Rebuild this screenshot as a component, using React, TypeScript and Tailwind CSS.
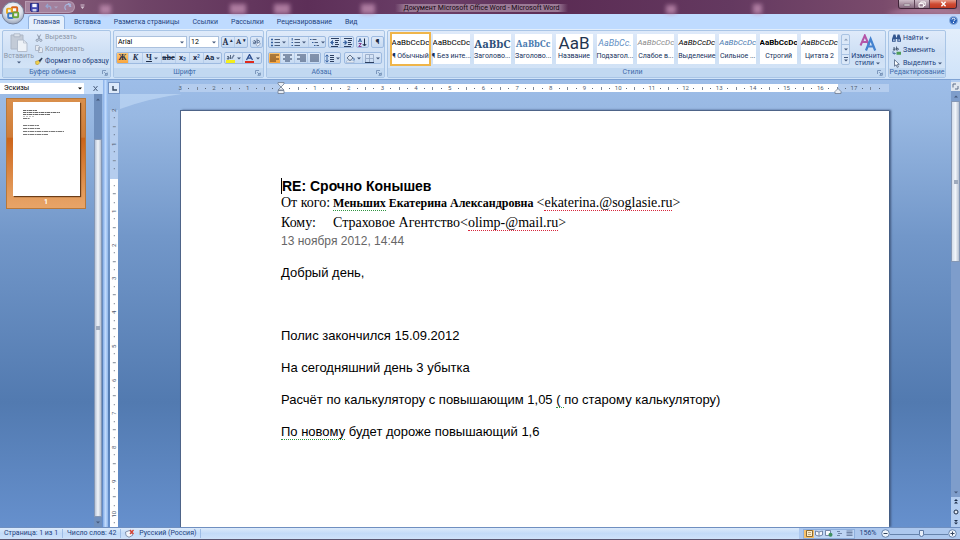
import { ReactNode } from "react";
import clsx from "clsx";

const tabs = [
  "Вставка",
  "Разметка страницы",
  "Ссылки",
  "Рассылки",
  "Рецензирование",
  "Вид",
];

const styles = [
  { name: "¶ Обычный", sample: "AaBbCcDc", look: "text-[8px] text-black" },
  { name: "¶ Без инте...", sample: "AaBbCcDc", look: "text-[8px] text-black" },
  {
    name: "Заголово...",
    sample: "AaBbC",
    look: "font-[Noto_Serif,Liberation_Serif,serif] text-[11px] font-bold text-[#2d4f78]",
  },
  {
    name: "Заголово...",
    sample: "AaBbCc",
    look: "font-[Noto_Serif,Liberation_Serif,serif] text-[9px] font-bold text-[#4a7ab0]",
  },
  {
    name: "Название",
    sample: "AaB",
    look: "text-[17px] text-[#1f3550]",
  },
  {
    name: "Подзагол...",
    sample: "AaBbCc.",
    look: "text-[9px] italic text-[#5f8fc4]",
  },
  {
    name: "Слабое в...",
    sample: "AaBbCcDc",
    look: "text-[8px] italic text-[#8a8a8a]",
  },
  {
    name: "Выделение",
    sample: "AaBbCcDc",
    look: "text-[8px] italic text-black",
  },
  {
    name: "Сильное ...",
    sample: "AaBbCcDc",
    look: "text-[8px] italic text-[#4a7ab0]",
  },
  {
    name: "Строгий",
    sample: "AaBbCcDc",
    look: "text-[8px] font-bold text-black",
  },
  {
    name: "Цитата 2",
    sample: "AaBbCcDc",
    look: "text-[8px] italic text-black",
  },
];

const horizontalUnits = [
  3, 2, 1, 0, 1, 2, 3, 4, 5, 6, 7, 8, 9, 10, 11, 12, 13, 14, 15, 16, 17,
];
const verticalUnits = [2, 1, 0, 1, 2, 3, 4, 5, 6, 7, 8, 9, 10];

function Caret({ className }: { className?: string }) {
  return (
    <svg
      viewBox="0 0 4 3"
      className={clsx("h-[3px] w-1 shrink-0 fill-[#44597c]", className)}
    >
      <path d="M0 0.5h4L2 2.5z" />
    </svg>
  );
}

function Launcher() {
  return (
    <svg viewBox="0 0 6 6" className="h-[6px] w-[6px]" fill="none">
      <path d="M0.5 4V0.5H4" stroke="#7d98bd" />
      <path d="M2.2 2.2l2 2M5.3 2.8v2.5H2.8z" stroke="#6683ab" strokeWidth="0.8" />
    </svg>
  );
}

interface GroupProps {
  title: string;
  className?: string;
  launcher?: boolean;
  children: ReactNode;
}

function Group({ title, className, launcher = true, children }: GroupProps) {
  return (
    <section
      className={clsx(
        "flex flex-col overflow-hidden rounded-[2px] border border-[#a9c5e6] bg-linear-to-b from-[#dfeafa] via-[#cddff4] to-[#d6e6f8]",
        className
      )}
    >
      <div className="min-h-0 flex-1">{children}</div>
      <div className="flex h-[9px] items-center bg-[#c1d8f1] text-[#3e6aaa]">
        <h2 className="flex-1 text-center">{title}</h2>
        {launcher && (
          <button aria-label={title} className="pr-[2px]">
            <Launcher />
          </button>
        )}
      </div>
    </section>
  );
}

function ToolSet({ children }: { children: ReactNode }) {
  return (
    <div className="flex h-3 divide-x divide-[#b6cdea] overflow-hidden rounded-[2px] border border-[#9dbae0] bg-linear-to-b from-[#dce8f8] to-[#c6daf2]">
      {children}
    </div>
  );
}

interface ToolProps {
  label: string;
  className?: string;
  caret?: boolean;
  active?: boolean;
  children: ReactNode;
}

function Tool({ label, className, caret, active, children }: ToolProps) {
  return (
    <button
      aria-label={label}
      className={clsx(
        "flex items-center justify-center gap-[2px] text-[8px] leading-none text-[#1d2d48]",
        active && "bg-linear-to-b from-[#fbc573] to-[#f9a63c]",
        className
      )}
    >
      {children}
      {caret && <Caret />}
    </button>
  );
}

function Lines({ d, className }: { d: string; className?: string }) {
  return (
    <svg
      viewBox="0 0 9 9"
      className={clsx("h-[9px] w-[9px]", className)}
      fill="none"
      stroke="#2c3f60"
    >
      <path d={d} />
    </svg>
  );
}

function ListIcon({ kind }: { kind: "bullet" | "number" | "level" }) {
  return (
    <svg viewBox="0 0 9 9" className="h-[9px] w-[9px]" fill="none">
      {kind === "bullet" && (
        <path d="M0 1.5h2M0 4.5h2M0 7.5h2" stroke="#35609f" strokeWidth="1.6" />
      )}
      {kind === "number" && (
        <path d="M1.2 0v2.5M0.5 4.5h1.5M0.5 7.5h1.5" stroke="#35609f" />
      )}
      {kind === "level" ? (
        <>
          <path d="M0 1.5h1.5M2 4.5h1.5M4 7.5h1.5" stroke="#35609f" />
          <path d="M2.5 1.5h4M4.5 4.5h3.5M6.5 7.5h2.5" stroke="#4c5f7e" />
        </>
      ) : (
        <path d="M3.5 1.5h5.5M3.5 4.5h5.5M3.5 7.5h5.5" stroke="#4c5f7e" />
      )}
    </svg>
  );
}

function IndentIcon({ right }: { right?: boolean }) {
  return (
    <svg viewBox="0 0 9 9" className="h-[9px] w-[9px]" fill="none">
      <path
        d="M1 0.5h8M5 2.5h4M5 4.5h3M5 6.5h4M1 8.5h7"
        stroke="#2c3f60"
      />
      <path
        d={right ? "M0 4.5h2.5M2 2.5l2 2-2 2z" : "M4 4.5H1.5M2.5 2.5l-2 2 2 2z"}
        stroke="#35609f"
        fill="#35609f"
        strokeWidth="0.8"
      />
    </svg>
  );
}

function TitleBar() {
  return (
    <header className="relative flex h-[14px] items-center bg-[linear-gradient(90deg,#8d6580_0,#6f4467_15%,#5d2f58_32%,#6b3f68_45%,#5b2c54_58%,#643960_76%,#7a4b6c_92%,#96697e_100%)]">
      <svg
        className="absolute inset-0 h-full w-full blur-[2px]"
        viewBox="0 0 960 14"
        preserveAspectRatio="none"
        fill="#c691b5"
      >
        <path d="M100 5h11v9h-11zM230 4h16v10h-16zM274 4h16v10h-16zM361 4h14v10h-14zM666 5h10v9h-10zM753 4h9v10h-9z" opacity="0.75" />
        <path d="M885 14q30-12 75-3v3z" opacity="0.5" />
      </svg>
      <div className="relative ml-[25px] flex h-3 w-[50px] items-center gap-[6px] rounded-r-full border border-[#c3abc0]/60 bg-[#b99bb5]/60 pl-1">
        <button aria-label="Сохранить">
          <svg viewBox="0 0 9 9" className="h-[9px] w-[9px]">
            <path d="M0.5 0.5h8v8h-7l-1-1z" fill="#4348b0" stroke="#262a80" />
            <path d="M2.3 0.8h4.4v3.4H2.3z" fill="#f4f6ff" />
            <path d="M2.5 6h4v2.5h-4z" fill="#c9cde8" />
          </svg>
        </button>
        <button aria-label="Отменить" className="flex items-center gap-[2px]">
          <svg viewBox="0 0 7 8" className="h-2 w-[7px]" fill="none">
            <path d="M1 3.2h3.2q2 0.4 1.6 3.3M3 1L1 3.2 3 5.2" stroke="#96a5cf" strokeWidth="1.2" />
          </svg>
          <Caret className="fill-[#a9a4c4]" />
        </button>
        <button aria-label="Повторить">
          <svg viewBox="0 0 8 8" className="h-2 w-2" fill="none">
            <path d="M2 6.8A3 3 0 1 1 6.8 4M4 0.4l2.4 1L5 3.6" stroke="#a6b4db" strokeWidth="1.2" />
          </svg>
        </button>
      </div>
      <button aria-label="Настройка панели" className="relative ml-[5px]">
        <svg viewBox="0 0 5 6" className="h-[6px] w-[5px]" fill="#d5c3d3">
          <path d="M0.5 0.5h4v1h-4zM0.5 2.5h4l-2 2.5z" />
        </svg>
      </button>
      <h1 className="relative flex-1 pt-[2px] pr-5 text-center text-[7px] text-[#14060f]">
        <span className="bg-[linear-gradient(90deg,transparent,#9b7a96_6%,#9b7a96_94%,transparent)] px-2">
          Документ Microsoft Office Word - Microsoft Word
        </span>
      </h1>
      <div className="relative mr-[3px] flex h-[9px] self-start overflow-hidden rounded-b-[3px] border border-t-0 border-[#3f2438]">
        <button
          aria-label="Свернуть"
          className="flex w-4 items-center justify-center border-r border-[#5c4055] bg-linear-to-b from-[#cdbcc8] to-[#86697f]"
        >
          <svg viewBox="0 0 8 6" className="h-[6px] w-2">
            <path d="M1 3.2h6v1.6H1z" fill="#fff" stroke="#4a3a4c" strokeWidth="0.4" />
          </svg>
        </button>
        <button
          aria-label="Восстановить"
          className="flex w-[15px] items-center justify-center border-r border-[#5c4055] bg-linear-to-b from-[#cdbcc8] to-[#86697f]"
        >
          <svg viewBox="0 0 8 7" className="h-[7px] w-2" fill="none">
            <path d="M2.8 2V1h4.4v3.5H5.8" stroke="#fff" />
            <path d="M1 2.6h4.4V6H1z" stroke="#fff" />
          </svg>
        </button>
        <button
          aria-label="Закрыть"
          className="flex w-[26px] items-center justify-center bg-linear-to-b from-[#e79c8b] via-[#cf4a33] to-[#c03a22]"
        >
          <svg viewBox="0 0 7 6" className="h-[6px] w-[7px]" fill="none">
            <path d="M1.4 0.8l4.2 4.4M5.6 0.8L1.4 5.2" stroke="#fff" strokeWidth="1.4" />
          </svg>
        </button>
      </div>
      <button aria-label="Office" className="absolute top-[1px] left-[1px] z-10">
        <svg viewBox="0 0 24 24" className="h-6 w-6">
          <defs>
            <radialGradient id="orb" cx="0.5" cy="0.35" r="0.65">
              <stop offset="0" stopColor="#ffffff" />
              <stop offset="0.6" stopColor="#dde2ec" />
              <stop offset="1" stopColor="#97a3b8" />
            </radialGradient>
          </defs>
          <circle cx="12" cy="12" r="11" fill="url(#orb)" stroke="#76829c" />
          <g fill="none" strokeWidth="1.9">
            <rect x="10.8" y="6.2" width="5.4" height="5.2" rx="0.8" stroke="#d8631e" />
            <rect x="6" y="7.6" width="4.8" height="4.6" rx="0.8" stroke="#eaa81c" />
            <rect x="7.2" y="12.4" width="4.8" height="4.6" rx="0.8" stroke="#3c79c6" />
            <rect x="12.2" y="11.4" width="5" height="4.8" rx="0.8" stroke="#6aa636" />
          </g>
        </svg>
      </button>
    </header>
  );
}

function TabBar() {
  return (
    <nav className="flex h-[15px] items-end bg-[#bfdbff] pl-7 text-[#1e427c]">
      <button className="h-[14px] w-[37px] rounded-t-[3px] border border-b-0 border-[#93b4e0] bg-[#e6f0fc]">
        Главная
      </button>
      <div className="flex h-[14px] flex-1 items-center gap-[13px] pl-[9px]">
        {tabs.map((tab) => (
          <button key={tab}>{tab}</button>
        ))}
      </div>
      <button aria-label="Справка" className="mr-[2px] mb-1">
        <svg viewBox="0 0 9 9" className="h-[9px] w-[9px]">
          <circle cx="4.5" cy="4.5" r="4" fill="#2c62b8" stroke="#8fb2e2" />
          <path d="M3 3.5q0-1.3 1.5-1.3T6 3.5Q6 4.3 4.5 5M4.5 6v1" stroke="#fff" fill="none" />
        </svg>
      </button>
    </nav>
  );
}

function Clipboard() {
  return (
    <Group title="Буфер обмена" className="w-[109px]">
      <div className="flex h-full">
        <button className="flex w-8 flex-col items-center pt-[2px] text-[#8c97a8]">
          <svg viewBox="0 0 18 19" className="h-[19px] w-[18px]">
            <path d="M1 2h12v14H1z" fill="#c3cbd7" stroke="#adb7c6" />
            <path d="M4 0.8h6v3H4z" fill="#dbe1ea" stroke="#a5afbe" strokeWidth="0.7" />
            <path d="M7.5 7h6l3.5 3v8.5H7.5z" fill="#eef2f7" stroke="#b3bdcc" />
            <path d="M13.5 7v3H17" fill="none" stroke="#b3bdcc" strokeWidth="0.7" />
          </svg>
          Вставить
          <Caret className="fill-[#9aa6b8]" />
        </button>
        <div className="flex flex-col py-[1px] text-[#8c97a8]">
          <button className="flex h-3 items-center gap-[2px]">
            <svg viewBox="0 0 8 8" className="h-2 w-2" fill="none" stroke="#8e9aad">
              <path d="M2.4 0.5l2.4 5M5.6 0.5l-2.4 5" />
              <circle cx="2.2" cy="6.3" r="1.1" />
              <circle cx="5.8" cy="6.3" r="1.1" />
            </svg>
            Вырезать
          </button>
          <button className="flex h-[13px] items-center gap-[2px]">
            <svg viewBox="0 0 8 8" className="h-2 w-2" fill="#e4e9f1" stroke="#a3aec0" strokeWidth="0.8">
              <path d="M0.5 0.5h3l1 1v4h-4zM3.5 2.5h3l1 1v4h-4z" />
            </svg>
            Копировать
          </button>
          <button className="flex h-[13px] items-center gap-[2px] text-[#1e427c]">
            <svg viewBox="0 0 8 8" className="h-2 w-2">
              <path d="M0.5 4.5l3-1 1.5 1.8-2 2.4-2.2-0.5z" fill="#f0cf4c" stroke="#a98a26" strokeWidth="0.5" />
              <path d="M3.5 3.6L6.8 0.4l0.9 1L5 5.2z" fill="#33455f" />
            </svg>
            Формат по образцу
          </button>
        </div>
      </div>
    </Group>
  );
}

function FontGroup() {
  return (
    <Group title="Шрифт" className="w-[151px]">
      <div className="flex flex-col gap-1 pt-[5px] pl-[2px]">
        <div className="flex gap-[2px]">
          <label className="flex h-3 w-[71px] items-center border border-[#abc1de] bg-white pr-[2px]">
            <select aria-label="Шрифт" className="flex-1 appearance-none pl-[1px] text-black">
              <option>Arial</option>
            </select>
            <Caret />
          </label>
          <label className="flex h-3 w-[30px] items-center border border-[#abc1de] bg-white pr-[2px]">
            <select aria-label="Размер" className="w-5 flex-1 appearance-none pl-[1px] text-black">
              <option>12</option>
            </select>
            <Caret />
          </label>
          <ToolSet>
            <Tool label="Увеличить" className="w-[13px] font-serif text-[9px] font-bold">
              A<sup className="text-[5px]">▴</sup>
            </Tool>
            <Tool label="Уменьшить" className="w-3 font-serif font-bold">
              A<sup className="text-[5px]">▾</sup>
            </Tool>
          </ToolSet>
          <ToolSet>
            <Tool label="Очистить" className="w-[11px]">
              <svg viewBox="0 0 9 9" className="h-[9px] w-[9px]" fill="none">
                <path d="M1 3.5q1-2 2.5-0.5v2.5M3.5 4Q1 4 1.2 5.2t2.3 0M5 0.5v4.5M5 3q2.5-1.5 2.5 0.5T5 5" stroke="#42587c" strokeWidth="0.8" />
                <path d="M4 6.5l3-2 1.5 1.5-3 2.3z" fill="#eef3fb" stroke="#6d83a6" strokeWidth="0.6" />
              </svg>
            </Tool>
          </ToolSet>
        </div>
        <div className="flex gap-[2px]">
          <ToolSet>
            <Tool label="Полужирный" active className="w-3 font-serif font-bold">
              Ж
            </Tool>
            <Tool label="Курсив" className="w-[14px] font-serif font-bold italic">
              К
            </Tool>
            <Tool label="Подчеркнутый" caret className="w-[19px] font-serif font-bold">
              <u>Ч</u>
            </Tool>
            <Tool label="Зачеркнутый" className="w-[14px] font-serif text-[7px] font-bold">
              <s>abc</s>
            </Tool>
            <Tool label="Подстрочный" className="w-[14px] font-bold">
              <span>
                x<sub className="text-[5px] text-[#35609f]">2</sub>
              </span>
            </Tool>
            <Tool label="Надстрочный" className="w-[14px] font-bold">
              <span>
                x<sup className="text-[5px] text-[#35609f]">2</sup>
              </span>
            </Tool>
            <Tool label="Регистр" caret className="w-[17px] font-bold">
              Aa
            </Tool>
          </ToolSet>
          <ToolSet>
            <Tool label="Цвет выделения" caret className="w-[18px]">
              <svg viewBox="0 0 9 9" className="h-[9px] w-[9px]">
                <path d="M0 6h9v3H0z" fill="#f4ee1c" />
                <path d="M1 3q1-1.5 2 0v2M3 3.8Q1 4 1.2 4.8T3 4.8M4.5 1v4" stroke="#33455f" strokeWidth="0.8" fill="none" />
                <path d="M5 4.5L7.5 0.5l1.2 0.7L6.3 5z" fill="#6c7f9e" />
              </svg>
            </Tool>
            <Tool label="Цвет текста" caret className="w-[18px]">
              <svg viewBox="0 0 9 9" className="h-[9px] w-[9px]">
                <path d="M0 7h9v2H0z" fill="#e02a1c" />
                <path d="M1.5 6L4.5 0.5 7.5 6M2.8 4.2h3.4" stroke="#2d4f90" strokeWidth="1.3" fill="none" />
              </svg>
            </Tool>
          </ToolSet>
        </div>
      </div>
    </Group>
  );
}

function ParagraphGroup() {
  return (
    <Group title="Абзац" className="w-[119px]">
      <div className="flex flex-col gap-1 pt-[5px] pl-[1px]">
        <div className="flex gap-[2px]">
          <ToolSet>
            <Tool label="Маркеры" caret className="w-5">
              <ListIcon kind="bullet" />
            </Tool>
            <Tool label="Нумерация" caret className="w-5">
              <ListIcon kind="number" />
            </Tool>
            <Tool label="Многоуровневый список" caret className="w-[17px]">
              <ListIcon kind="level" />
            </Tool>
          </ToolSet>
          <ToolSet>
            <Tool label="Уменьшить отступ" className="w-3">
              <IndentIcon />
            </Tool>
            <Tool label="Увеличить отступ" className="w-3">
              <IndentIcon right />
            </Tool>
          </ToolSet>
          <ToolSet>
            <Tool label="Сортировка" className="w-[11px]">
              <svg viewBox="0 0 9 9" className="h-[9px] w-[9px]" fill="none">
                <path d="M0.5 4l1.5-3.5L3.5 4M1 3h2" stroke="#35609f" />
                <path d="M0.7 5.5h2.6L0.7 8.5h2.8" stroke="#8a3f90" />
                <path d="M6.5 0.5v7M4.8 6l1.7 2 1.7-2" stroke="#1d2d48" />
              </svg>
            </Tool>
          </ToolSet>
          <ToolSet>
            <Tool label="Знаки" className="w-[11px] font-bold">
              ¶
            </Tool>
          </ToolSet>
        </div>
        <div className="flex gap-[3px]">
          <ToolSet>
            <Tool label="По левому краю" active className="w-3">
              <Lines className="stroke-[#5a3410]" d="M0 1h9M0 3h6M0 5h9M0 7h6" />
            </Tool>
            <Tool label="По центру" className="w-[14px]">
              <Lines d="M0 1h9M2 3h5M0 5h9M2 7h5" />
            </Tool>
            <Tool label="По правому краю" className="w-[13px]">
              <Lines d="M0 1h9M3 3h6M0 5h9M3 7h6" />
            </Tool>
            <Tool label="По ширине" className="w-3">
              <Lines d="M0 1h9M0 3h9M0 5h9M0 7h9" />
            </Tool>
          </ToolSet>
          <ToolSet>
            <Tool label="Интервал" caret className="w-[15px]">
              <svg viewBox="0 0 9 9" className="h-[9px] w-[9px]" fill="none">
                <path d="M2 1v7M0.5 2.5L2 0.8l1.5 1.7M0.5 6.5L2 8.2l1.5-1.7" stroke="#35609f" />
                <path d="M5 1.5h4M5 3.5h4M5 5.5h4M5 7.5h4" stroke="#2c3f60" />
              </svg>
            </Tool>
          </ToolSet>
          <ToolSet>
            <Tool label="Заливка" caret className="w-[18px]">
              <svg viewBox="0 0 9 9" className="h-[9px] w-[9px]">
                <path d="M0.5 7h7.5v1.6H0.5z" fill="#fff" stroke="#8ba0c0" strokeWidth="0.5" />
                <path d="M1 4l3-3 3 3-3 2.6z" fill="#dfe7f3" stroke="#33455f" strokeWidth="0.7" />
                <path d="M7 3.5q1.8 1.2 1 3" fill="none" stroke="#35609f" />
              </svg>
            </Tool>
            <Tool label="Границы" caret className="w-[18px]">
              <svg viewBox="0 0 9 9" className="h-[9px] w-[9px]" fill="none">
                <path d="M0.5 8V0.5h8V8M4.5 1v7M1 4.5h7" stroke="#8fa3c2" strokeWidth="0.8" />
                <path d="M0 8.5h9" stroke="#2c3f60" />
              </svg>
            </Tool>
          </ToolSet>
        </div>
      </div>
    </Group>
  );
}

function StylesGroup() {
  return (
    <Group title="Стили" className="flex-1">
      <div className="flex h-full pt-[3px] pl-1">
        <div className="flex min-w-0 flex-1 gap-1">
          {styles.map((style, i) => (
            <button
              key={i}
              className={clsx(
                "flex h-[30px] min-w-0 flex-1 flex-col items-center bg-white",
                i === 0 && "outline-2 outline-[#efb54a]"
              )}
            >
              <span
                className={clsx(
                  "flex h-[18px] w-full items-center justify-center overflow-hidden leading-none whitespace-nowrap",
                  style.look
                )}
              >
                {style.sample}
              </span>
              <span className="h-3 whitespace-nowrap text-[#15305c]">
                {style.name}
              </span>
            </button>
          ))}
        </div>
        <div className="ml-[3px] flex h-[31px] w-[9px] flex-col divide-y divide-[#a9c3e3] rounded-[2px] border border-[#a9c3e3] bg-[#dbe8f8]">
          <button aria-label="Вверх" className="flex flex-1 items-center justify-center">
            <Caret className="rotate-180 opacity-50" />
          </button>
          <button aria-label="Вниз" className="flex flex-1 items-center justify-center">
            <Caret />
          </button>
          <button aria-label="Дополнительно" className="flex flex-1 flex-col items-center justify-center gap-[1px]">
            <span className="h-px w-1 bg-[#44597c]" />
            <Caret />
          </button>
        </div>
        <button className="flex w-[35px] flex-col items-center text-[#1e427c]">
          <svg viewBox="0 0 18 18" className="h-[18px] w-[18px]" fill="none">
            <path d="M1.5 11.5L5.8 1.5l4.4 10M3 8h5.6" stroke="#b455a8" strokeWidth="2" />
            <path d="M7 16.5L11.6 5l4.6 11.5M8.8 12.5h5.6" stroke="#4482cf" strokeWidth="2.2" />
          </svg>
          <span className="leading-2">Изменить</span>
          <span className="flex items-center gap-[2px] leading-[7px]">
            стили <Caret />
          </span>
        </button>
      </div>
    </Group>
  );
}

function EditingGroup() {
  return (
    <Group title="Редактирование" launcher={false} className="w-[58px]">
      <div className="flex flex-col py-[1px] pl-[3px] text-[#1e427c]">
        <button className="flex h-3 items-center gap-[2px]">
          <svg viewBox="0 0 9 8" className="h-2 w-[9px]" fill="#33568f">
            <path d="M1.5 0.5h2l0.7 3h0.6l0.7-3h2L9 5v2.7H5.3V5H3.7v2.7H0V5z" />
            <path d="M1 5.5h1.7v1.3H1zM6.3 5.5H8v1.3H6.3z" fill="#c5d8f2" />
          </svg>
          Найти <Caret />
        </button>
        <button className="flex h-[13px] items-center gap-[2px]">
          <svg viewBox="0 0 9 9" className="h-[9px] w-[9px]" fill="none">
            <path d="M1 2.2q1.5-1 2 0v2M3 3Q1 3 1.2 3.8T3 3.9M4.5 0.5v3.7M4.5 2.5q2-0.8 2 0.6t-2 0.9" stroke="#33455f" strokeWidth="0.8" />
            <path d="M1 5.2v2.3h2M2.4 6.5l1 1-1 1" stroke="#35609f" strokeWidth="0.8" />
            <path d="M4.5 5.8H9v3H4.5z" fill="#4f9c58" />
          </svg>
          Заменить
        </button>
        <button className="flex h-[13px] items-center gap-[2px]">
          <svg viewBox="0 0 9 9" className="h-[9px] w-[9px]">
            <path d="M2.5 0.7v6.5l1.6-1.4 1.1 2.6 1.2-0.5-1.1-2.5h2z" fill="#fff" stroke="#4c5f7e" strokeWidth="0.8" />
          </svg>
          Выделить <Caret />
        </button>
      </div>
    </Group>
  );
}

interface RulerProps {
  units: number[];
  vertical?: boolean;
}

/* Four marks per unit: number, dot, tick, dot */
function RulerMarks({ units, vertical }: RulerProps) {
  return (
    <>
      {units.flatMap((unit, i) =>
        [0, 1, 2, 3].map((part) => (
          <span
            key={`${i}-${part}`}
            className={clsx(
              "flex min-h-0 min-w-0 flex-1 items-center justify-center text-[6px] leading-none text-[#4f5c70]",
              vertical && "-rotate-90"
            )}
          >
            {part === 0 && unit > 0 && unit}
            {part === 2 && <i className="h-[3px] w-px shrink-0 bg-[#7d8796]" />}
            {part % 2 === 1 && <i className="h-px w-px shrink-0 bg-[#5b6678]" />}
          </span>
        ))
      )}
    </>
  );
}

function Thumbnails() {
  return (
    <aside className="flex w-[103px] flex-col">
      <div className="flex h-[14px] items-center bg-[#c5dcf8] pt-[2px]">
        <button className="flex h-[11px] w-[84px] items-center justify-between bg-white pr-[2px] pl-1 text-[7px] text-black">
          Эскизы
          <Caret className="fill-black" />
        </button>
        <button aria-label="Закрыть" className="ml-2">
          <svg viewBox="0 0 7 7" className="h-[7px] w-[7px]" fill="none">
            <path d="M1.5 1l4 5M5.5 1l-4 5" stroke="#4c5f7e" />
          </svg>
        </button>
      </div>
      <div className="flex flex-1 justify-between">
        <div className="pt-1 pl-[6px]">
          <button className="flex h-[111px] w-20 flex-col items-center border border-[#b8783a] bg-[linear-gradient(#d98f4c,#cf7c38_35%,#cc641a_36%,#e39a5a_85%,#e8a468)] pt-[3px]">
            <span className="flex h-[94px] w-[67px] flex-col bg-white pt-[7px] pl-[10px] shadow-[1px_1px_1px_#6b3d17]">
              <svg viewBox="0 0 42 26" className="h-[26px] w-[42px]" stroke="#555" fill="none">
                <path d="M0 1.5h14M0 3.5h37M0 5.5h27" strokeWidth="0.9" strokeDasharray="3 .6 2 .4" />
                <path d="M0 7.5h12" stroke="#999" strokeWidth="0.6" strokeDasharray="2 1" />
                <path d="M0 9.5h7M0 16.5h16M0 19.5h17M0 22.5h41M0 25.5h25" strokeWidth="0.8" strokeDasharray="4 .6 2 .4" />
              </svg>
            </span>
            <span className="pt-[2px] font-bold text-white">1</span>
          </button>
        </div>
        <div className="mr-[1px] flex w-2 flex-col bg-[#6f8fbd]">
          <button aria-label="Вверх" className="flex h-[10px] items-center justify-center">
            <Caret className="rotate-180 fill-[#1f3860]" />
          </button>
          <div className="mt-[35px] flex flex-1 items-center justify-center border border-[#8497b5] bg-linear-to-r from-[#b9c5d8] via-[#f1f5fa] to-[#b6c0d0]">
            <i className="h-1 w-1 bg-[#9eaabd]" />
          </div>
          <button aria-label="Вниз" className="flex h-[10px] items-center justify-center">
            <Caret className="fill-[#1f3860]" />
          </button>
        </div>
      </div>
    </aside>
  );
}

interface MarkedProps {
  kind: "grammar" | "spelling";
  children: ReactNode;
}

function Marked({ kind, children }: MarkedProps) {
  return (
    <span
      className={clsx(
        "border-b border-dotted",
        kind === "grammar" ? "border-[#2f9440]" : "border-[#d8263c]"
      )}
    >
      {children}
    </span>
  );
}

function Letter() {
  return (
    <article className="ml-[60px] flex-1 border-t border-l border-[#4e6488] bg-white pt-[67px] pl-[100px] font-[Liberation_Sans,Arial,sans-serif] text-[13px] leading-4 whitespace-nowrap text-black shadow-[2px_0_2px_#41597f]">
      <h2 className="border-l border-black text-[14px] leading-4 font-bold">
        RE: Срочно Конышев
      </h2>
      <p className="mt-[1px] flex font-[Liberation_Serif,serif] text-[14px] leading-4">
        <span className="w-[52px]">От кого:</span>
        <b className="text-[12px] whitespace-pre">
          <Marked kind="grammar">Меньших</Marked> Екатерина Александровна{" "}
        </b>
        <span>
          &lt;<Marked kind="spelling">ekaterina.@soglasie.ru</Marked>&gt;
        </span>
      </p>
      <p className="mt-1 flex font-[Liberation_Serif,serif] text-[14px] leading-4">
        <span className="w-[52px]">Кому:</span>
        <span>
          Страховое Агентство&lt;
          <Marked kind="spelling">olimp-@mail.ru</Marked>&gt;
        </span>
      </p>
      <p className="mt-[2px] text-[12px] leading-4 text-[#666]">
        13 ноября 2012, 14:44
      </p>
      <div className="mt-4 flex flex-col gap-4">
        <p className="mb-[31px]">Добрый день,</p>
        <p>Полис закончился 15.09.2012</p>
        <p>На сегодняшний день 3 убытка</p>
        <p>
          Расчёт по калькулятору с повышающим 1,05{" "}
          <Marked kind="grammar">( </Marked>по старому калькулятору)
        </p>
        <p>
          <Marked kind="grammar">По новому</Marked> будет дороже повышающий 1,6
        </p>
      </div>
    </article>
  );
}

function Workspace() {
  return (
    <div className="relative flex min-w-0 flex-1 flex-col overflow-hidden">
      <svg
        viewBox="0 0 120 30"
        className="absolute top-[14px] left-3 h-[30px] w-[120px]"
      >
        <path d="M0 0h62Q30 4 0 15z" fill="#c4dcf6" opacity="0.6" />
      </svg>
      <div className="relative flex h-[14px] items-end">
        <button
          aria-label="Табуляция"
          className="flex h-3 w-3 items-center justify-center border border-[#7393c4] bg-[#dce9fa]"
        >
          <svg viewBox="0 0 5 5" className="h-[5px] w-[5px]" fill="none">
            <path d="M1 0v4h4" stroke="#33455f" strokeWidth="1.4" />
          </svg>
        </button>
        <div className="relative mb-[2px] ml-[56px] flex h-2 flex-1 bg-[linear-gradient(90deg,transparent_4px,#b5cdee_4px,#b5cdee_105px,#fff_105px,#fff_662px,#b5cdee_662px)] pr-[5px]">
          <RulerMarks units={horizontalUnits} />
          <svg viewBox="0 0 8 12" className="absolute -top-[2px] left-[101px] h-3 w-2" fill="#e9eef5" stroke="#6e7c91" strokeWidth="0.8">
            <path d="M1 0.5h6v1.5L4 5 1 2zM4 5l3 3H1zM1 8.5h6v3H1z" />
          </svg>
          <svg viewBox="0 0 8 6" className="absolute top-1 left-[658px] h-[6px] w-2" fill="#e9eef5" stroke="#6e7c91" strokeWidth="0.8">
            <path d="M4 0.5l3 3v2H1v-2z" />
          </svg>
        </div>
        <div className="w-[62px]" />
      </div>
      <div className="flex min-h-0 flex-1 pt-3">
        <div className="w-3 pl-[2px]">
          <div className="flex h-[438px] w-2 flex-col bg-[linear-gradient(transparent_4px,#b5cdee_4px,#b5cdee_73px,#fff_73px)]">
            <RulerMarks vertical units={verticalUnits} />
          </div>
        </div>
        <div className="flex flex-1 pt-1">
          <Letter />
        </div>
        <div className="w-[62px]" />
      </div>
    </div>
  );
}

function PageScroll() {
  return (
    <div className="flex w-[9px] flex-col bg-[#b3cdf0] pt-[2px]">
      <button aria-label="Линейка" className="flex h-[9px] items-center justify-center bg-[#e1e7ef]">
        <svg viewBox="0 0 7 7" className="h-[7px] w-[7px]" fill="none" stroke="#5f6f88">
          <path d="M1 4.5V1h3M3 6h3V3" />
        </svg>
      </button>
      <div className="flex flex-1 flex-col bg-[#7e9dcb]">
        <button aria-label="Вверх" className="flex h-[10px] items-center justify-center">
          <Caret className="rotate-180 fill-[#1f3860]" />
        </button>
        <div className="flex h-[161px] items-center justify-center border border-[#8497b5] bg-linear-to-r from-[#d3dce9] via-[#f1f5fa] to-[#b6c0d0]">
          <i className="h-1 w-1 bg-[#9eaabd]" />
        </div>
        <div className="flex-1" />
        <button aria-label="Вниз" className="flex h-[10px] items-center justify-center">
          <Caret className="fill-[#1f3860]" />
        </button>
      </div>
      <div className="flex h-[30px] flex-col items-center justify-around">
        <svg viewBox="0 0 4 5" className="h-[5px] w-1" fill="#1d2d48">
          <path d="M2 0l2 2H0zM2 2.5l2 2H0z" />
        </svg>
        <svg viewBox="0 0 6 6" className="h-[6px] w-[6px]" fill="#e6edf7" stroke="#1d2d48">
          <circle cx="3" cy="3" r="2" />
        </svg>
        <svg viewBox="0 0 4 5" className="h-[5px] w-1" fill="#1d2d48">
          <path d="M2 2l2-2H0zM2 4.5l2-2H0z" />
        </svg>
      </div>
    </div>
  );
}

function StatusBar() {
  return (
    <footer className="flex h-[13px] items-center border-t border-b border-t-[#6f8fc0] border-b-[#5b5670] bg-linear-to-b from-[#dceafb] via-[#c3dbf8] to-[#cfe2fa] text-[#1e427c]">
      <span className="border-r border-[#9ebde6] pr-1 pl-1">
        Страница: 1 из 1
      </span>
      <span className="border-r border-[#9ebde6] px-1">Число слов: 42</span>
      <button aria-label="Правописание" className="ml-1">
        <svg viewBox="0 0 10 9" className="h-[9px] w-[10px]">
          <path d="M0.5 3l4-1.5L8 6 4 8.3 1 6.5z" fill="#f3f6fb" stroke="#6c7f9e" strokeWidth="0.8" />
          <path d="M5 1l3.5 4M8.5 1L5 5" stroke="#d8412f" strokeWidth="1.3" />
        </svg>
      </button>
      <span className="ml-1 border-r border-[#9ebde6] pr-1">
        Русский (Россия)
      </span>
      <div className="ml-auto flex h-full items-center bg-[#adc8ee] pl-1">
        <div className="flex h-[10px] w-[52px] items-center border border-[#8fb0de] bg-[#bed5f4]">
          <button aria-label="Разметка страницы" className="flex h-full flex-1 items-center justify-center bg-[#f6c069]">
            <svg viewBox="0 0 7 7" className="h-[7px] w-[7px]">
              <path d="M0.5 0.5h6v6h-6z" fill="#fbeccb" stroke="#8a6a34" />
              <path d="M2 2.5h3M2 4.5h3" stroke="#a68a58" strokeWidth="0.7" />
            </svg>
          </button>
          <button aria-label="Режим чтения" className="flex flex-1 justify-center">
            <svg viewBox="0 0 8 7" className="h-[7px] w-2">
              <path d="M0.5 1l3.5 1 3.5-1v4L4 6.2 0.5 5zM4 2v4" fill="#f6f8fc" stroke="#5a6f94" strokeWidth="0.8" />
            </svg>
          </button>
          <button aria-label="Веб-документ" className="flex flex-1 justify-center">
            <svg viewBox="0 0 8 7" className="h-[7px] w-2">
              <path d="M0.5 0.5h5v5h-5z" fill="#f6f8fc" stroke="#5a6f94" strokeWidth="0.8" />
              <circle cx="5.5" cy="4.8" r="2" fill="#3f8f5e" />
            </svg>
          </button>
          <button aria-label="Структура" className="flex flex-1 justify-center">
            <svg viewBox="0 0 7 7" className="h-[7px] w-[7px]">
              <path d="M1 1.5h3M2 3.5h4M1 5.5h3" stroke="#7185a8" />
            </svg>
          </button>
          <button aria-label="Черновик" className="flex flex-1 justify-center">
            <svg viewBox="0 0 7 7" className="h-[7px] w-[7px]">
              <path d="M0.5 1h6M0.5 2.5h6M0.5 4h6M0.5 5.5h6" stroke="#7185a8" />
            </svg>
          </button>
        </div>
        <button className="w-[26px]">156%</button>
        <button aria-label="Уменьшить масштаб">
          <svg viewBox="0 0 9 9" className="h-[9px] w-[9px]">
            <circle cx="4.5" cy="4.5" r="3.8" fill="#eef4fc" stroke="#6683ab" />
            <path d="M2.5 4.5h4" stroke="#33455f" />
          </svg>
        </button>
        <input
          type="range"
          aria-label="Масштаб"
          defaultValue={55}
          className="h-2 w-[58px] appearance-none bg-[linear-gradient(transparent_4px,#6683ab_4px,#6683ab_5px,transparent_5px)] [&::-webkit-slider-thumb]:h-[7px] [&::-webkit-slider-thumb]:w-[5px] [&::-webkit-slider-thumb]:appearance-none [&::-webkit-slider-thumb]:rounded-b-full [&::-webkit-slider-thumb]:border [&::-webkit-slider-thumb]:border-[#5f7ba6] [&::-webkit-slider-thumb]:bg-[#e6eefa]"
        />
        <button aria-label="Увеличить масштаб" className="mr-[3px]">
          <svg viewBox="0 0 9 9" className="h-[9px] w-[9px]">
            <circle cx="4.5" cy="4.5" r="3.8" fill="#eef4fc" stroke="#6683ab" />
            <path d="M2.5 4.5h4M4.5 2.5v4" stroke="#33455f" />
          </svg>
        </button>
      </div>
    </footer>
  );
}

function App() {
  return (
    <div className="flex h-screen flex-col overflow-hidden font-[Roboto,Noto_Sans,sans-serif] text-[7px] leading-[9px] whitespace-nowrap">
      <TitleBar />
      <TabBar />
      <div className="flex h-[51px] gap-[2px] border-b border-[#7fa3d4] bg-linear-to-b from-[#e3eefb] to-[#cfe3f9] px-[2px] pt-[1px] pb-[1px]">
        <Clipboard />
        <FontGroup />
        <ParagraphGroup />
        <StylesGroup />
        <EditingGroup />
        <div className="w-[10px]" />
      </div>
      <main className="flex min-h-0 flex-1 bg-[linear-gradient(#9dbde8_0,#98b8e2_8%,#7297c9_35%,#527ab0_72%,#6690cd_100%)]">
        <Thumbnails />
        <div className="w-[5px] bg-linear-to-r from-[#86aee8] via-[#c0dafc] to-[#8fb6ea]" />
        <Workspace />
        <PageScroll />
      </main>
      <StatusBar />
    </div>
  );
}

export default App;
